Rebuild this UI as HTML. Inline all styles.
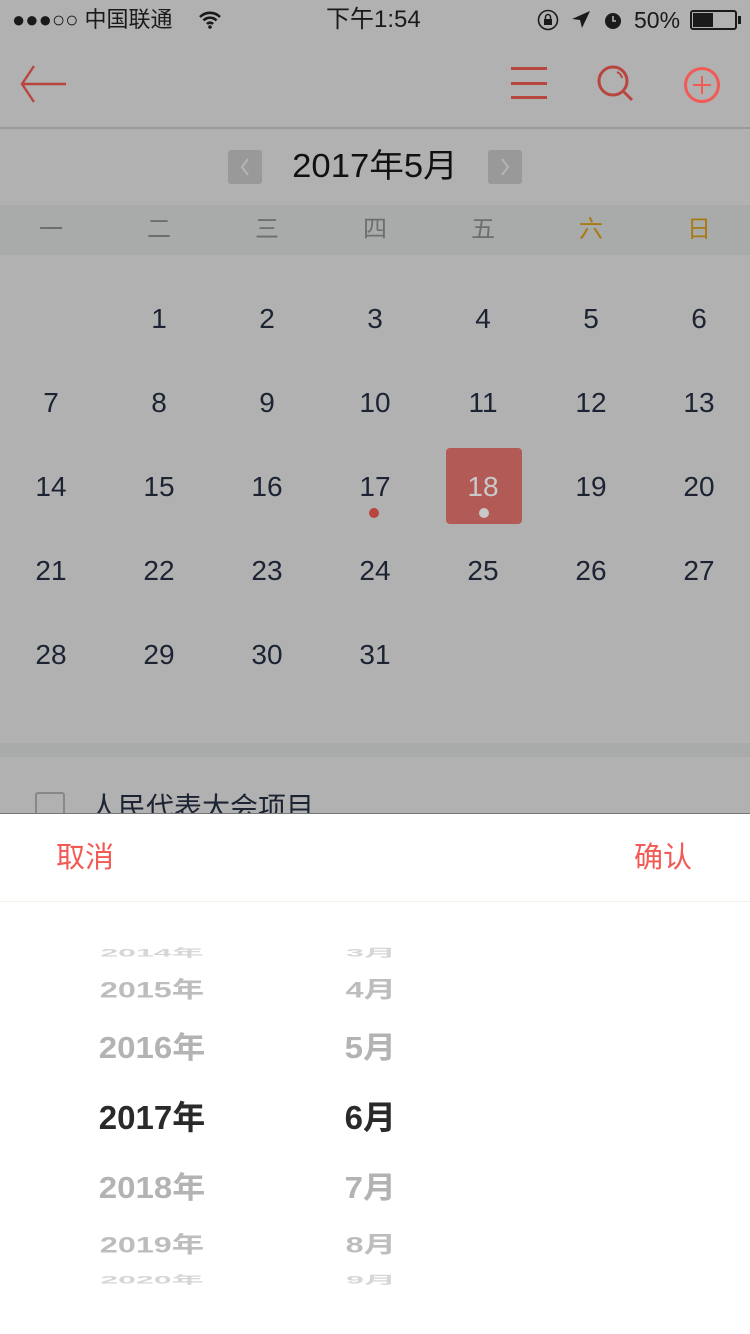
<!DOCTYPE html>
<html><head><meta charset="utf-8"><style>
*{margin:0;padding:0;box-sizing:border-box}
body{width:750px;height:1334px;position:relative;overflow:hidden;background:#b1b1b1;font-family:"Liberation Sans","Noto Sans CJK SC",sans-serif}
.a{position:absolute}
.c{position:absolute;width:108px;text-align:center;font-size:28px;color:#1c2333;line-height:40px}
.w{position:absolute;width:108px;text-align:center;font-size:24px;color:#6e6e6e;top:212px;line-height:36px}
.y{position:absolute;left:42px;width:220px;text-align:center;font-weight:bold;color:#b3b3b3;white-space:nowrap;font-size:33px;line-height:40px}
.m{position:absolute;left:280px;width:116px;text-align:right;font-weight:bold;color:#b3b3b3;white-space:nowrap;font-size:33px;line-height:40px;transform-origin:right center}
</style></head><body>
<!-- status bar -->
<div class="a" style="left:12px;top:4px;font-size:22px;color:#1a1a1a;line-height:32px">●●●○○ 中国联通</div>
<svg class="a" style="left:198px;top:10px" width="24" height="20" viewBox="0 0 24 20"><path d="M2 7a14 14 0 0 1 20 0M5.5 10.5a9 9 0 0 1 13 0M9 14a4 4 0 0 1 6 0" stroke="#1a1a1a" stroke-width="2.6" fill="none"/><circle cx="12" cy="17" r="1.8" fill="#1a1a1a"/></svg>
<div class="a" style="left:326px;top:4px;font-size:24px;color:#1a1a1a;line-height:32px">下午1:54</div>
<svg class="a" style="left:536px;top:9px" width="90" height="22" viewBox="0 0 90 22"><circle cx="12" cy="11" r="9.5" stroke="#1a1a1a" stroke-width="1.6" fill="none"/><rect x="8" y="10" width="8" height="6" fill="#1a1a1a"/><path d="M9.5 10V8a2.5 2.5 0 0 1 5 0v2" stroke="#1a1a1a" stroke-width="1.5" fill="none"/><path d="M54 2L36 10l8 1 2 8z" fill="#1a1a1a"/><circle cx="77" cy="12" r="8" fill="#1a1a1a"/><path d="M77 7v5h3" stroke="#b1b1b1" stroke-width="1.6" fill="none"/></svg>
<div class="a" style="left:634px;top:4px;font-size:23px;color:#1a1a1a;line-height:32px">50%</div>
<div class="a" style="left:690px;top:10px;width:47px;height:20px;border:2px solid #1a1a1a;border-radius:3px"><div style="width:20px;height:14px;background:#1a1a1a;margin:1px"></div></div>
<div class="a" style="left:738px;top:16px;width:3px;height:8px;background:#1a1a1a"></div>
<!-- nav -->
<svg class="a" style="left:20px;top:62px" width="50" height="45" viewBox="0 0 50 45"><path d="M14 4L2 22l12 18M2 22h44" stroke="#b8463f" stroke-width="2.4" fill="none"/></svg>
<div class="a" style="left:511px;top:67px;width:36px;height:3px;background:#b8463f"></div>
<div class="a" style="left:511px;top:82px;width:36px;height:3px;background:#b8463f"></div>
<div class="a" style="left:511px;top:96px;width:36px;height:3px;background:#b8463f"></div>
<svg class="a" style="left:596px;top:64px" width="40" height="40" viewBox="0 0 40 40"><circle cx="17" cy="17" r="14" stroke="#b8463f" stroke-width="3" fill="none"/><path d="M28 28l8 8" stroke="#b8463f" stroke-width="3"/><path d="M21 8a8 8 0 0 1 5 6" stroke="#b8463f" stroke-width="2" fill="none"/></svg>
<svg class="a" style="left:682px;top:65px" width="40" height="40" viewBox="0 0 40 40"><circle cx="20" cy="20" r="16.5" stroke="#f25a55" stroke-width="3" fill="none"/><path d="M20 11v18M11 20h18" stroke="#f25a55" stroke-width="2"/></svg>
<div class="a" style="left:0;top:127px;width:750px;height:2px;background:#9a9a9a"></div>
<!-- month header -->
<div class="a" style="left:228px;top:150px;width:34px;height:34px;background:#999;border-radius:3px"></div>
<svg class="a" style="left:228px;top:150px" width="34" height="34"><path d="M20 9l-6 8 6 8" stroke="#b5b5b5" stroke-width="2" fill="none"/></svg>
<div class="a" style="left:488px;top:150px;width:34px;height:34px;background:#999;border-radius:3px"></div>
<svg class="a" style="left:488px;top:150px" width="34" height="34"><path d="M14 9l6 8-6 8" stroke="#b5b5b5" stroke-width="2" fill="none"/></svg>
<div class="a" style="left:270px;top:144px;width:210px;text-align:center;font-size:33px;color:#111;line-height:44px;transform:scaleX(1.05)">2017年5月</div>
<!-- weekdays -->
<div class="a" style="left:0;top:205px;width:750px;height:50px;background:#a9abab"></div>
<div class="w" style="left:-3px">一</div><div class="w" style="left:105px">二</div><div class="w" style="left:213px">三</div><div class="w" style="left:321px">四</div><div class="w" style="left:429px">五</div><div class="w" style="left:537px;color:#a97a12">六</div><div class="w" style="left:645px;color:#a97a12">日</div>
<!-- highlight -->
<div class="a" style="left:446px;top:448px;width:76px;height:76px;background:#b25b56;border-radius:4px"></div>
<div class="a" style="left:369px;top:508px;width:10px;height:10px;border-radius:50%;background:#b8463f"></div>
<div class="a" style="left:479px;top:508px;width:10px;height:10px;border-radius:50%;background:#c8c8c8"></div>
<!-- days -->
<div class="c" style="left:105px;top:299px">1</div><div class="c" style="left:213px;top:299px">2</div><div class="c" style="left:321px;top:299px">3</div><div class="c" style="left:429px;top:299px">4</div><div class="c" style="left:537px;top:299px">5</div><div class="c" style="left:645px;top:299px">6</div>
<div class="c" style="left:-3px;top:383px">7</div><div class="c" style="left:105px;top:383px">8</div><div class="c" style="left:213px;top:383px">9</div><div class="c" style="left:321px;top:383px">10</div><div class="c" style="left:429px;top:383px">11</div><div class="c" style="left:537px;top:383px">12</div><div class="c" style="left:645px;top:383px">13</div>
<div class="c" style="left:-3px;top:467px">14</div><div class="c" style="left:105px;top:467px">15</div><div class="c" style="left:213px;top:467px">16</div><div class="c" style="left:321px;top:467px">17</div><div class="c" style="left:429px;top:467px;color:#c9c9c9">18</div><div class="c" style="left:537px;top:467px">19</div><div class="c" style="left:645px;top:467px">20</div>
<div class="c" style="left:-3px;top:551px">21</div><div class="c" style="left:105px;top:551px">22</div><div class="c" style="left:213px;top:551px">23</div><div class="c" style="left:321px;top:551px">24</div><div class="c" style="left:429px;top:551px">25</div><div class="c" style="left:537px;top:551px">26</div><div class="c" style="left:645px;top:551px">27</div>
<div class="c" style="left:-3px;top:635px">28</div><div class="c" style="left:105px;top:635px">29</div><div class="c" style="left:213px;top:635px">30</div><div class="c" style="left:321px;top:635px">31</div>
<div class="a" style="left:0;top:743px;width:750px;height:14px;background:#a9abab"></div>
<div class="a" style="left:35px;top:792px;width:30px;height:30px;border:2px solid #888;border-radius:3px"></div>
<div class="a" style="left:90px;top:790px;font-size:28px;color:#1c2333;line-height:36px">人民代表大会项目</div>
<!-- sheet -->
<div class="a" style="left:0;top:813px;width:750px;height:521px;background:#fff;border-top:1px solid #777"></div>
<div class="a" style="left:56px;top:838px;font-size:29px;color:#f25a55;line-height:40px">取消</div>
<div class="a" style="left:634px;top:838px;font-size:29px;color:#f25a55;line-height:40px">确认</div>
<div class="a" style="left:0;top:901px;width:750px;height:1px;background:#f5f1e6"></div>
<!-- picker -->
<div class="y" style="top:933px;color:#d6d6d6;transform:scale(0.97,0.33)">2014年</div>
<div class="m" style="top:933px;color:#d6d6d6;transform:scale(0.97,0.33)">3月</div>
<div class="y" style="top:970px;color:#bdbdbd;transform:scale(0.98,0.68)">2015年</div>
<div class="m" style="top:970px;color:#bdbdbd;transform:scale(0.98,0.68)">4月</div>
<div class="y" style="top:1028px;transform:scaleY(0.92)">2016年</div>
<div class="m" style="top:1028px;transform:scaleY(0.92)">5月</div>
<div class="y" style="top:1098px;color:#2a2a2a;font-weight:600">2017年</div>
<div class="m" style="top:1098px;color:#2a2a2a;font-weight:600">6月</div>
<div class="y" style="top:1168px;transform:scaleY(0.92)">2018年</div>
<div class="m" style="top:1168px;transform:scaleY(0.92)">7月</div>
<div class="y" style="top:1225px;color:#bdbdbd;transform:scale(0.98,0.68)">2019年</div>
<div class="m" style="top:1225px;color:#bdbdbd;transform:scale(0.98,0.68)">8月</div>
<div class="y" style="top:1260px;color:#d6d6d6;transform:scale(0.97,0.33)">2020年</div>
<div class="m" style="top:1260px;color:#d6d6d6;transform:scale(0.97,0.33)">9月</div>
</body></html>
